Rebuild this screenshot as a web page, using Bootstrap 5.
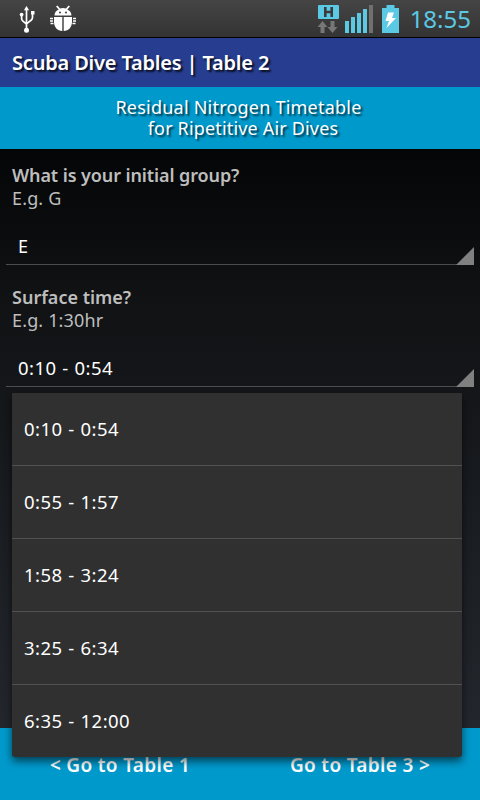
<!DOCTYPE html>
<html lang="en">
<head>
<meta charset="utf-8">
<meta name="viewport" content="width=device-width, initial-scale=1">
<title>Scuba Dive Tables</title>
<link href="https://cdn.jsdelivr.net/npm/bootstrap@5.3.0/dist/css/bootstrap.min.css" rel="stylesheet">
<style>
body{width:480px;height:800px;background:linear-gradient(#000 0,#040506 145px,#101214 300px,#23272d 728px);font-family:"Noto Sans",sans-serif;font-size:18px;line-height:23px;color:#fff}
.status{height:38px;background:linear-gradient(#454545,#333);border-bottom:1px solid #000;padding:0 9px 0 19px}
.clock{font-size:24px;color:#5bc8e4;font-weight:400;line-height:38px;margin-left:10px}
.title{height:49px;background:#273d8f;padding:0 12px;font-size:20px;font-weight:600;text-shadow:2px 2px 2px #000c}
.subtitle{height:62px;background:#09c;padding-top:10px;font-size:18px;line-height:21px;text-shadow:2px 2px 2px #000a}
.sub1{letter-spacing:.22px;padding-right:3px}
.sub2{letter-spacing:.17px;padding-left:6px}
.question{height:122px;padding:15px 6px 0}
.ask{color:#bebebe;padding-left:6px}
.ask strong{font-weight:600}
.q1{letter-spacing:-.1px}
.hint{letter-spacing:.15px}
.picker{height:54px;margin-top:1px;padding:18px 12px 0;border-bottom:1px solid #4b4d4f;position:relative}
.picker svg{position:absolute;right:0;bottom:-1px}
.val{font-size:18.5px;letter-spacing:.42px;word-spacing:.7px}
.picker .val{padding-bottom:2px}
.options{position:absolute;left:12px;top:393px;width:450px;height:364px;background:#303030;border-radius:1px 1px 3px 3px;box-shadow:0 4px 8px #0009;z-index:2}
.options li{height:73px;padding:0 12px 2px;border-bottom:1px solid #515151}
.options li:last-child{border:0}
.bottom{height:72px;background:#09c;font-weight:600;font-size:19px;line-height:24px;padding-top:25px;letter-spacing:.33px}
.bottom a{color:#fff}
.s-title{letter-spacing:-.18px}
</style>
</head>
<body class="d-flex flex-column overflow-hidden position-relative">
<header class="status d-flex align-items-center flex-shrink-0">
<svg width="60" height="38" viewBox="19 0 60 38" fill="#fff" stroke="none">
<path d="M26.500 6l2.600 4.300h-5.200z"/><circle cx="26.500" cy="30.300" r="2.500"/><circle cx="21.600" cy="14.600" r="1.900"/><path d="M31 11h3.500v3.500H31z"/>
<path d="M26.500 9v21M21.600 15v3.600q0 1.500 1.300 2.500l3.600 2.900M32.500 14v3.500q0 1.500-1.200 2.500l-4.800 3.800" fill="none" stroke="#fff" stroke-width="1.700"/>
<path d="M54.500 15.400c0-3 1.700-5 4.200-6L56 6.400l1.500-1 2.500 3a12 12 0 0 1 6 0l2.500-3 1.500 1-2.700 3c2.500 1 4.200 3 4.200 6z"/>
<circle cx="60" cy="12.600" r="1" fill="#3b3b3b"/><circle cx="66" cy="12.600" r="1" fill="#3b3b3b"/>
<path d="M54 17h8.300v14C57.500 31 54 27 54 22zM63.700 17H72v5c0 5-3.500 9-8.300 9z"/>
<path d="M50 18.500h3M50 21h3M50.500 23.600h3M73 18.500h3M73 21h3M72.500 23.600h3" stroke="#fff" stroke-width="1.500"/>
</svg>
<svg class="ms-auto" width="83" height="38" viewBox="317 0 83 38">
<rect x="318" y="5" width="21" height="14" rx="1" fill="#5bc8e4"/>
<path d="M325.300 7v10M331.700 7v10M325 12h7" fill="none" stroke="#3b3b3b" stroke-width="2.600"/>
<path d="M322.500 21l5 6h-3v6h-4v-6h-3zM332.500 33l5-6h-3v-6h-4v6h-3z" fill="#777"/>
<path d="M345 21h4v12h-4zM351 17h4v16h-4zM357 13h4v20h-4zM363 9h4v24h-4z" fill="#5bc8e4"/>
<path d="M369 5h4v28h-4z" fill="#707070"/>
<path d="M382 8h4.500V5h8v3h4.500v25h-17z" fill="#5bc8e4"/>
<path d="M388 12.500h6l-2 5.500h4l-9.500 10 2.500-7h-3.500z" fill="#fff"/>
</svg>
<span class="clock">18:55</span>
</header>
<nav class="title d-flex align-items-center flex-shrink-0"><span class="s-title">Scuba Dive Tables | Table 2</span></nav>
<div class="subtitle text-center flex-shrink-0"><div class="sub1">Residual Nitrogen Timetable</div><div class="sub2">for Ripetitive Air Dives</div></div>
<main class="flex-grow-1">
<section class="question"><div class="ask"><strong class="q1">What is your initial group?</strong><div class="hint">E.g. G</div></div>
<div class="picker d-flex align-items-center"><span>E</span><svg width="18" height="18"><path d="M18 0v18H0z" fill="#808080"/></svg></div></section>
<section class="question"><div class="ask"><strong class="q2">Surface time?</strong><div class="hint">E.g. 1:30hr</div></div>
<div class="picker d-flex align-items-center"><span class="val">0:10 - 0:54</span><svg width="18" height="18"><path d="M18 0v18H0z" fill="#808080"/></svg></div></section>
</main>
<ul class="options list-unstyled mb-0">
<li class="d-flex align-items-center val">0:10 - 0:54</li>
<li class="d-flex align-items-center val">0:55 - 1:57</li>
<li class="d-flex align-items-center val">1:58 - 3:24</li>
<li class="d-flex align-items-center val">3:25 - 6:34</li>
<li class="d-flex align-items-center val">6:35 - 12:00</li>
</ul>
<footer class="bottom d-flex text-center flex-shrink-0"><a class="w-50 text-decoration-none" href="#">&lt; Go to Table 1</a><a class="w-50 text-decoration-none" href="#">Go to Table 3 &gt;</a></footer>
<script src="https://cdn.jsdelivr.net/npm/bootstrap@5.3.0/dist/js/bootstrap.bundle.min.js"></script>
</body>
</html>
